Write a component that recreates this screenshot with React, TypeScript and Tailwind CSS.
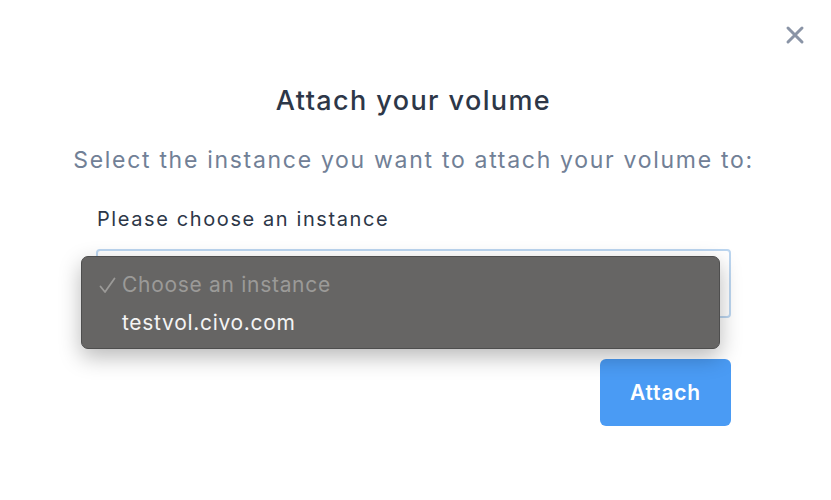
import React from "react";

export default function App() {
  return (
    <div
      className="relative w-[831px] h-[500px] bg-white overflow-hidden"
      style={{ fontFamily: "Inter, 'Noto Sans', sans-serif" }}
    >
      {/* close control */}
      <button className="absolute right-[26px] top-[25px] w-[20px] h-[20px] flex items-center justify-center text-[#8a94a6]">
        <svg width="20" height="20" viewBox="0 0 20 20" fill="none">
          <path d="M3 3L17 17M17 3L3 17" stroke="currentColor" strokeWidth="3" strokeLinecap="round" />
        </svg>
      </button>

      <div className="flex flex-col items-center pt-[84px] pr-[4px]">
        <h2 className="text-[27px] leading-[34px] font-medium text-[#2d3748] tracking-[1.4px]">
          Attach your volume
        </h2>
        <p className="mt-[27px] text-[23px] leading-[30px] text-[#718096] tracking-[1.7px]">
          Select the instance you want to attach your volume to:
        </p>

        <div className="mt-[31px] w-[635px] flex flex-col">
          <label className="text-[20px] leading-[26px] text-[#2d3748] pl-[1px] tracking-[1.6px]">
            Please choose an instance
          </label>

          <div className="relative mt-[17px]">
            <div className="h-[69px] rounded-[4px] border-2 border-[#bcd6f0] bg-white" />

            {/* open native list */}
            <div className="absolute left-[-15px] top-[7px] w-[639px] h-[93px] rounded-[7px] border border-[#4e4e4e] bg-[#666564] shadow-[0_8px_22px_rgba(0,0,0,0.28)] flex flex-col pt-[9px] text-[21px] leading-[38px] tracking-[0.7px]">
              <div className="flex items-center pl-[17px] text-[#9b9a98]">
                <svg width="17" height="17" viewBox="0 0 17 17" fill="none" className="mr-[6px] mt-[1px]">
                  <path d="M1.5 9.5L6 15L15.5 1.5" stroke="currentColor" strokeWidth="1.8" strokeLinecap="round" strokeLinejoin="round" />
                </svg>
                <span>Choose an instance</span>
              </div>
              <div className="pl-[40px] text-[#f4f4f4]">testvol.civo.com</div>
            </div>
          </div>

          <div className="mt-[41px] flex justify-end">
            <button className="w-[131px] h-[67px] rounded-[6px] bg-[#4a9bf4] text-white text-[21px] font-semibold tracking-[0.8px]">
              Attach
            </button>
          </div>
        </div>
      </div>
    </div>
  );
}
